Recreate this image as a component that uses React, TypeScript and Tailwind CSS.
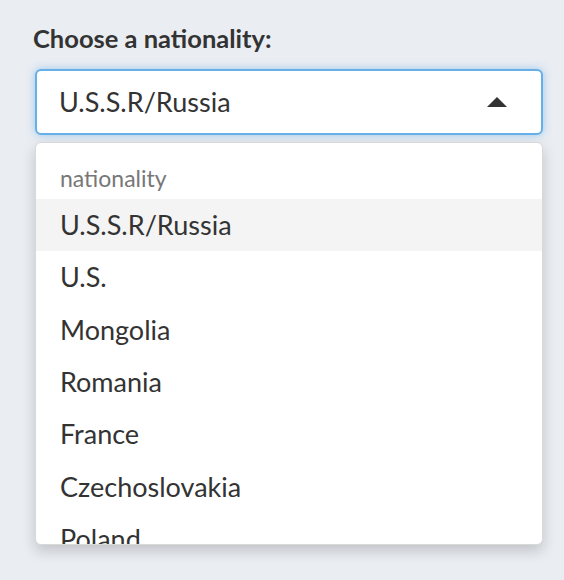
const options = [
  "U.S.S.R/Russia",
  "U.S.",
  "Mongolia",
  "Romania",
  "France",
  "Czechoslovakia",
  "Poland",
];

export default function App() {
  return (
    <div
      className="min-h-[580px] w-full bg-[#eaedf2] px-[35px] pt-[23px] text-[#333]"
      style={{ fontFamily: "Lato, 'Noto Sans', sans-serif" }}
    >
      <label className="-ml-[2px] block text-[25.5px] font-bold leading-[30px]">Choose a nationality:</label>

      <div className="mt-[16px] w-[508px]">
        <div className="flex h-[66px] items-center justify-between rounded-[6px] border-2 border-[#66afe9] bg-white pl-[22px] pr-[34px] shadow-[0_0_8px_rgba(102,175,233,0.6)]">
          <span className="text-[27px] leading-[32px]">U.S.S.R/Russia</span>
          <svg width="20" height="10" viewBox="0 0 20 10">
            <polygon points="0,10 10,0 20,10" fill="#333" />
          </svg>
        </div>

        <div className="mt-[7px] h-[403px] overflow-hidden rounded-[6px] border border-[#d9d9d9] bg-white shadow-[0_6px_14px_rgba(0,0,0,0.18)]">
          <div className="flex h-[56px] items-end pb-[7px] pl-[24px] text-[23px] leading-[28px] text-[#777]">nationality</div>
          {options.map((o, i) => (
            <div
              key={o}
              className={`flex h-[52.3px] shrink-0 items-center pl-[24px] text-[27px] leading-[32px] ${i === 0 ? "bg-[#f4f4f4]" : ""}`}
            >
              {o}
            </div>
          ))}
        </div>
      </div>
    </div>
  );
}
